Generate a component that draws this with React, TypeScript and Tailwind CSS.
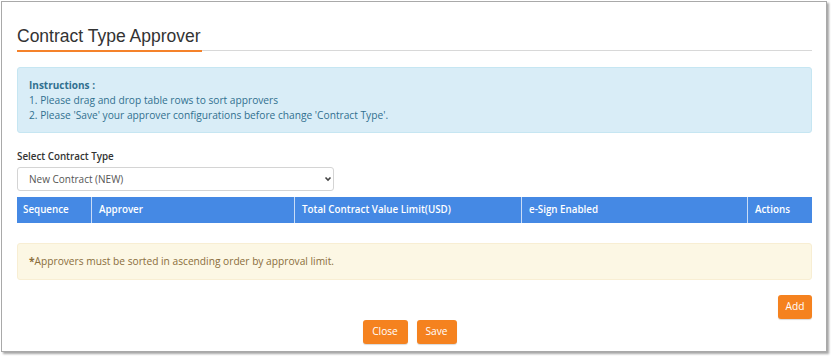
import React from "react";

export default function App() {
  const cols = [
    { label: "Sequence", w: "w-[75px]" },
    { label: "Approver", w: "w-[202px]" },
    { label: "Total Contract Value Limit(USD)", w: "w-[226px]" },
    { label: "e-Sign Enabled", w: "w-[225px]" },
    { label: "Actions", w: "flex-1" },
  ];
  return (
    <div className="w-[832px] h-[357px] bg-white pl-[1px] pt-[1px] overflow-hidden" style={{ fontFamily: '"Open Sans", "Noto Sans", sans-serif' }}>
      <div className="w-[826px] h-[351px] border border-[#a9a9a9] shadow-[2px_2px_2px_rgba(0,0,0,0.35)] bg-white pl-[15px] pr-[14px] pt-[23px]">
        {/* Header */}
        <div className="flex items-end">
          <div
            className="text-[17.5px] leading-[22px] text-[#333] pb-[3px] border-b-2 border-[#f5822a] pr-[1px]"
            style={{ fontFamily: '"Liberation Sans", Arial, sans-serif' }}
          >
            Contract Type Approver
          </div>
          <div className="flex-1 border-b border-[#d8d8d8] mb-[1px]" />
        </div>

        {/* Info alert */}
        <div className="mt-[15px] h-[66px] border border-[#c6e6f2] bg-[#d9edf7] rounded-[3px] pl-[11px] pt-[10px] text-[10.2px] leading-[15px] text-[#31708f]">
          <div className="font-bold text-[10px]">Instructions :</div>
          <div>1. Please drag and drop table rows to sort approvers</div>
          <div>2. Please 'Save' your approver configurations before change 'Contract Type'.</div>
        </div>

        {/* Select */}
        <div className="mt-[16px] text-[9.8px] leading-[15px] font-semibold text-[#333]">Select Contract Type</div>
        <div className="mt-[3px] w-[317px] h-[24px] border border-[#d4d4d4] rounded-[3px] flex items-center justify-between pl-[11px] pr-[0px] text-[10px] text-[#555]">
          <span>New Contract (NEW)</span>
          <svg width="10" height="10" viewBox="0 0 10 10" fill="none" stroke="#444" strokeWidth="1.6">
            <path d="M2.5 3.5 L5 6 L7.5 3.5" />
          </svg>
        </div>

        {/* Table header */}
        <div className="mt-[6px] h-[26px] flex bg-[#4589e4] gap-[1px]">
          {cols.map((c) => (
            <div
              key={c.label}
              className={`${c.w} h-full flex items-center pl-[6px] text-[9.8px] font-semibold text-white ${c.label === "Actions" ? "" : "border-r border-[#c9dcf6]"}`}
            >
              {c.label}
            </div>
          ))}
        </div>

        {/* Warning alert */}
        <div className="mt-[20px] h-[37px] border border-[#f8eed3] bg-[#fcf7e4] rounded-[3px] pl-[11px] flex items-center text-[10.2px] text-[#8a6d3b]">
          <span className="font-bold">*</span>
          <span>Approvers must be sorted in ascending order by approval limit.</span>
        </div>

        {/* Add */}
        <div className="mt-[15px] flex justify-end">
          <button className="h-[24px] w-[34px] rounded-[3px] bg-[#f5821f] text-white text-[10.2px] shadow-[0_1px_1px_rgba(0,0,0,0.15)]">Add</button>
        </div>

        {/* Footer buttons */}
        <div className="mt-[1px] flex justify-center gap-[9px] pr-[10px]">
          <button className="h-[24px] w-[45px] rounded-[3px] bg-[#f5821f] text-white text-[10.2px] shadow-[0_1px_1px_rgba(0,0,0,0.15)]">Close</button>
          <button className="h-[24px] w-[40px] rounded-[3px] bg-[#f5821f] text-white text-[10.2px] shadow-[0_1px_1px_rgba(0,0,0,0.15)]">Save</button>
        </div>
      </div>
    </div>
  );
}
